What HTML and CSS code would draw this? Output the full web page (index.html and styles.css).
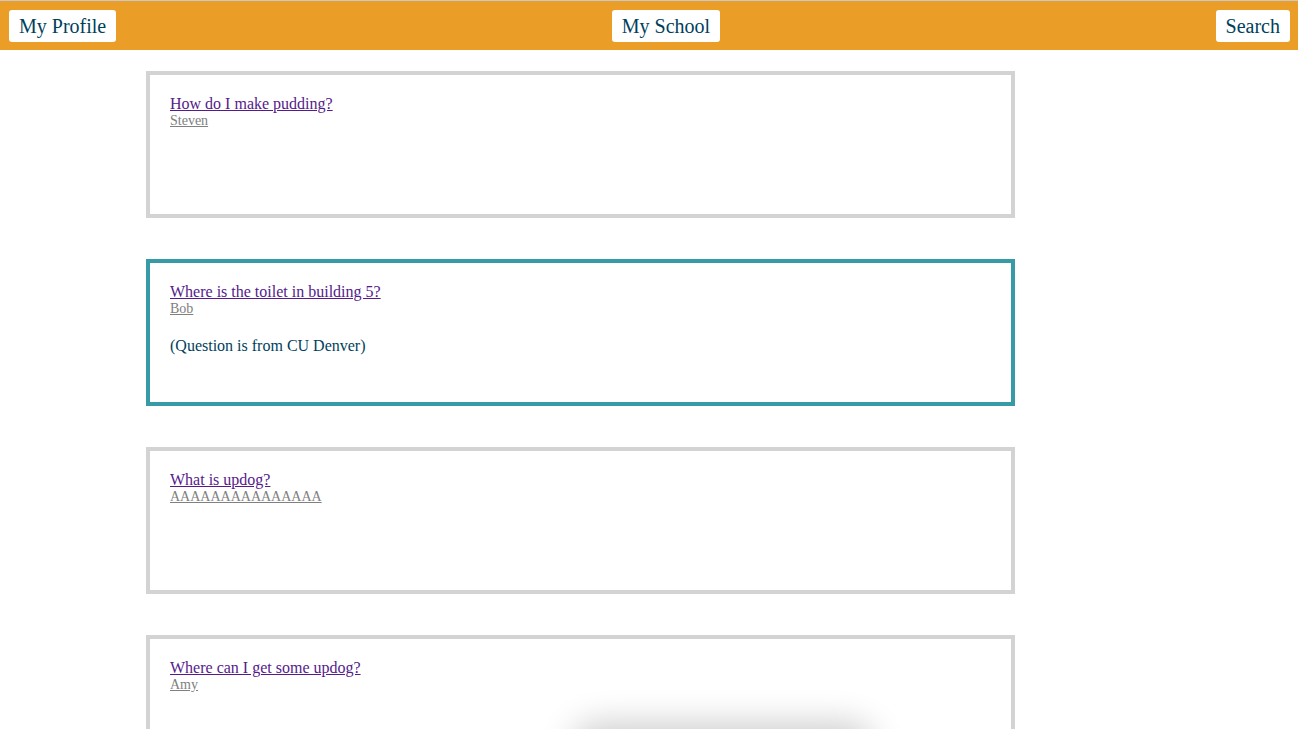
FILE: index.html
```html
<!DOCTYPE html>
<html>
<head>
<meta charset="utf-8">
<link rel="stylesheet" href="styles.css">
</head>
<body>
<header class="topbar">
  <a class="nav-btn" href="#">My Profile</a>
  <a class="nav-btn" href="#">My School</a>
  <a class="nav-btn" href="#">Search</a>
</header>
<main class="feed">
  <div class="card">
    <a class="q-title" href="#">How do I make pudding?</a>
    <a class="q-author" href="#">Steven</a>
  </div>
  <div class="card card-school">
    <a class="q-title" href="#">Where is the toilet in building 5?</a>
    <a class="q-author" href="#">Bob</a>
    <p class="q-note">(Question is from CU Denver)</p>
  </div>
  <div class="card">
    <a class="q-title" href="#">What is updog?</a>
    <a class="q-author" href="#">AAAAAAAAAAAAAAA</a>
  </div>
  <div class="card">
    <a class="q-title" href="#">Where can I get some updog?</a>
    <a class="q-author" href="#">Amy</a>
  </div>
</main>
<div class="float-shadow"></div>
</body>
</html>
```

FILE: styles.css
```css
html, body {
  margin: 0;
  padding: 0;
  background: #ffffff;
  font-family: "Liberation Serif", "Times New Roman", serif;
  overflow: hidden;
  height: 729px;
}

.topbar {
  display: flex;
  justify-content: space-between;
  align-items: center;
  background: #ea9e28;
  border-top: 1px solid #c9c9c9;
  height: 50px;
  padding: 1px 8px 0 9px;
  box-sizing: border-box;
}

.nav-btn {
  background: #ffffff;
  color: #003f5c;
  text-decoration: none;
  font-size: 20px;
  line-height: 32px;
  height: 32px;
  padding: 0 10px;
  border-radius: 3px;
}

.feed {
  display: flex;
  flex-direction: column;
  gap: 41px;
  padding-top: 21px;
  margin-left: 146px;
}

.card {
  box-sizing: border-box;
  width: 869px;
  height: 147px;
  border: 4px solid #d3d3d3;
  padding: 20px 20px;
  display: flex;
  flex-direction: column;
  align-items: flex-start;
}

.card-school {
  border-color: #379aa7;
}

.q-title {
  color: #551a8b;
  font-size: 16px;
  line-height: 18px;
}

.q-author {
  color: #808080;
  font-size: 14px;
  line-height: 16px;
}

.q-note {
  margin: 20px 0 0;
  color: #003f5c;
  font-size: 16px;
  line-height: 18px;
}

.float-shadow {
  position: fixed;
  left: 578px;
  width: 290px;
  bottom: -40px;
  height: 40px;
  border-radius: 20px;
  background: #ffffff;
  box-shadow: 0 0 34px 6px rgba(0, 0, 0, 0.2);
}
```
